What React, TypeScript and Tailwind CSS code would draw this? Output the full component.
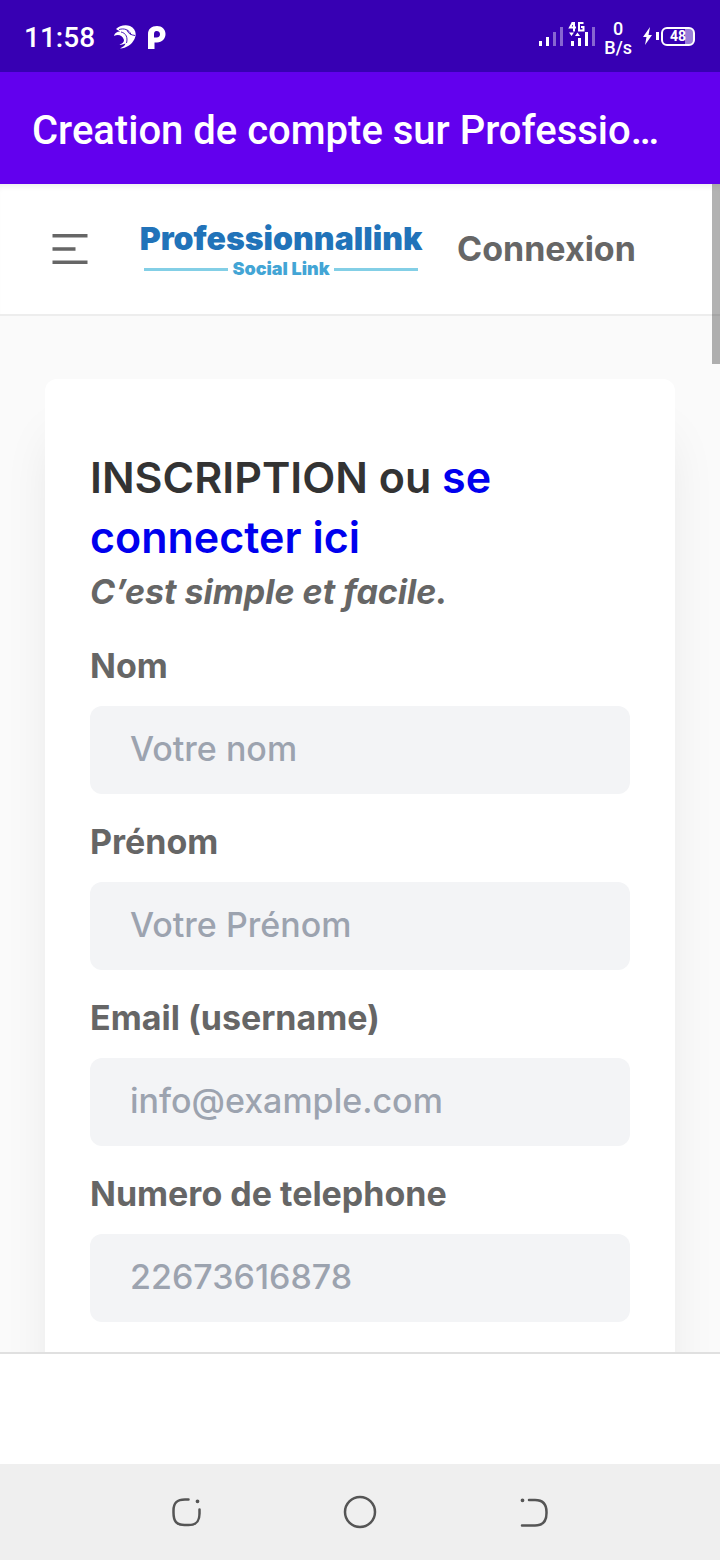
interface Field {
  id: string;
  label: string;
  type: string;
  placeholder: string;
}

const FIELDS: Field[] = [
  { id: "nom", label: "Nom", type: "text", placeholder: "Votre nom" },
  { id: "prenom", label: "Prénom", type: "text", placeholder: "Votre Prénom" },
  { id: "email", label: "Email (username)", type: "email", placeholder: "info@example.com" },
  { id: "telephone", label: "Numero de telephone", type: "tel", placeholder: "22673616878" },
];

function BirdIcon() {
  return (
    <svg width="24" height="24" viewBox="0 0 24 24" fill="none" aria-hidden="true">
      <path
        d="M3 4C6 1 12-1 17 1c5.500 2.500 7 8 4.500 13-3 6-8 9-14.500 9.500 3-1.500 5-3 5.500-5-2 1-4 1.500-6 1 3-1 4.500-2.500 4.500-4.500C9.500 10 5 9 1 11c.5-3 3-4.500 6-4.500C5.500 5.500 4.500 5 3 4z"
        fill="#fff"
      />
      <path
        d="M6 4.500c5-1.500 10 0 12 5M8 7c5 1 7 5.500 5.500 11M14 5c1 3.500 4 5 8 5.500"
        stroke="#3700b3"
        strokeWidth="0.9"
      />
    </svg>
  );
}

function ParkingIcon() {
  return (
    <svg width="19" height="24" viewBox="0 0 19 24" aria-hidden="true">
      <path
        d="M1 24V9C1 4 4.500 1 10 1c5 0 8.500 3.500 8.500 8S15 17.500 10 17.500H7.500V24zM9.500 6C7.500 6 7 7.500 7 9.500V12.500h2.500c2.500 0 3.500-1.500 3.500-3.300S12 6 9.500 6z"
        fill="#fff"
        fillRule="evenodd"
      />
    </svg>
  );
}

function SignalIcons() {
  return (
    <svg width="58" height="28" viewBox="0 0 58 28" aria-hidden="true">
      <g fill="#fff">
        <path d="M1 19h3v5H1zM8 15h3v9H8zM33 19h3v5h-3zM40 16h3v8h-3zM47 10h3v14h-3z" />
        <path d="M31 10.500h5l-2.500 3.500zM37 14h5l-2.500-3.500z" />
        <path d="M15 10h3v14h-3zM22 5h3v19h-3zM54 5h3v19h-3z" opacity="0.4" />
      </g>
      <path d="M34.500 0v1L32 5.500h6M36 0v9.500M45.500 1H41v7.500h4.500v-3.500h-2.500" fill="none" stroke="#fff" strokeWidth="2" />
    </svg>
  );
}

function StatusBar() {
  return (
    <div className="flex h-[72px] shrink-0 items-center justify-between bg-[#3700b3] pl-6 pr-[25px] font-['Roboto',sans-serif] text-white">
      <div className="flex items-center pt-0.5">
        <span className="pt-0.5 text-[28px] font-medium leading-8">11:58</span>
        <span className="ml-[18px]"><BirdIcon /></span>
        <span className="ml-2.5"><ParkingIcon /></span>
      </div>
      <div className="flex items-center">
        <SignalIcons />
        <div className="ml-2 flex flex-col items-center pt-1 text-[18px] font-medium leading-[19px]">
          <span>0</span>
          <span>B/s</span>
        </div>
        <svg className="ml-2.5" width="18" height="18" viewBox="0 0 18 18" fill="#fff" aria-hidden="true">
          <path d="M8 0L1 10h3.500L3 18l7-10H6.500zM14 5h3v8h-3z" />
        </svg>
        <div className="ml-px flex h-[19px] w-[34px] items-center justify-center rounded-md border-2 border-white bg-linear-to-r from-transparent from-75% to-white/50 to-75% text-[14px] font-bold leading-4">
          48
        </div>
      </div>
    </div>
  );
}

function Logo() {
  return (
    <a href="#" className="flex w-[282px] flex-col items-center pt-2">
      <span className="text-[32px] font-black leading-8 text-[#2173b9]">
        Professionnallink
      </span>
      <span className="flex w-full items-center gap-1 px-1">
        <span className="h-[3px] flex-1 bg-[#83cfe6]" />
        <span className="text-[18px] font-black leading-7 text-[#43a5d5]">Social Link</span>
        <span className="h-[3px] flex-1 bg-[#83cfe6]" />
      </span>
    </a>
  );
}

function SiteHeader() {
  return (
    <header className="flex h-[132px] shrink-0 items-center border-b-2 border-[#ededed] bg-white pl-[52px] shadow-[inset_0_6px_6px_-4px_rgba(0,0,0,0.08)]">
      <button type="button" aria-label="Menu">
        <svg width="36" height="32" viewBox="0 0 36 32" fill="#666" aria-hidden="true">
          <path d="M0.500 1h35v3.500h-35zM0.500 14.300h23v3.500h-23zM0.500 27.600h35v3.500h-35z" />
        </svg>
      </button>
      <div className="ml-[52px]"><Logo /></div>
      <a href="#" className="ml-[35px] text-[34px] font-bold leading-[50px] text-[#666]">Connexion</a>
    </header>
  );
}

function SignupForm() {
  return (
    <form className="mx-[45px] mt-[63px] rounded-xl bg-white px-[45px] pb-16 pt-[68px] shadow-[0_50px_50px_-12px_rgba(0,0,0,0.1)]">
      <h1 className="text-[43px] font-semibold leading-[60px] text-[#333]">
        INSCRIPTION ou <a href="#" className="text-[#0000ee]">se connecter ici</a>
      </h1>
      <p className="mb-6 text-[34px] font-bold italic leading-[50px] text-[#666]">C’est simple et facile.</p>
      {FIELDS.map((field) => (
        <div key={field.id} className="mb-[23px]">
          <label htmlFor={field.id} className="block text-[34px] font-bold leading-[50px] text-[#666]">
            {field.label}
          </label>
          <input
            id={field.id}
            type={field.type}
            placeholder={field.placeholder}
            className="mt-[15px] block h-[88px] w-full rounded-xl bg-[#f3f4f6] px-10 pb-1 text-[34px] font-medium text-[#666] placeholder:text-[#9ca3af]"
          />
        </div>
      ))}
    </form>
  );
}

function NavigationBar() {
  return (
    <nav className="flex h-24 shrink-0 items-center justify-center gap-[138px] bg-[#efefef]">
      <button type="button" aria-label="Applications récentes">
        <svg width="36" height="36" viewBox="0 0 36 36" fill="none" stroke="#555" strokeWidth="2.500" strokeLinecap="round" aria-hidden="true">
          <path d="M20.500 5.500H17C9 5.500 5.500 8.500 5.500 16.500v2c0 9 3 12.500 11 12.500h4c8 0 11-3.500 11-11.500v-4" />
          <circle cx="29.500" cy="7.300" r="1" fill="#555" strokeWidth="1.800" />
        </svg>
      </button>
      <button type="button" aria-label="Accueil">
        <svg width="36" height="36" viewBox="0 0 36 36" fill="none" stroke="#555" strokeWidth="2.500" aria-hidden="true">
          <circle cx="18" cy="18" r="15" />
        </svg>
      </button>
      <button type="button" aria-label="Retour">
        <svg width="36" height="36" viewBox="0 0 36 36" fill="none" stroke="#555" strokeWidth="2.500" strokeLinecap="round" aria-hidden="true">
          <path d="M13 6h6c8 0 11.500 4 11.500 12v1c0 8-3.500 12.500-11.500 12.500H6" />
          <circle cx="6.500" cy="6.300" r="1" fill="#555" strokeWidth="1.800" />
        </svg>
      </button>
    </nav>
  );
}

export default function App() {
  return (
    <div className="flex h-screen flex-col overflow-hidden bg-white font-['Inter',sans-serif]">
      <StatusBar />
      <div className="flex h-28 shrink-0 items-center bg-[#6200ee] px-8 pt-1.5">
        <div className="truncate font-['Roboto',sans-serif] text-[40px] font-medium leading-[56px] text-white">
          Creation de compte sur Professio…
        </div>
      </div>

      <div className="relative flex min-h-0 flex-1 flex-col">
        <SiteHeader />
        <main className="flow-root min-h-0 flex-1 overflow-hidden bg-[#fafafa]">
          <SignupForm />
        </main>
        {/* Scroll indicator */}
        <div className="absolute right-0 top-0 h-[180px] w-2 bg-black/30" />
      </div>

      <div className="h-28 shrink-0 border-t-2 border-[#e0e0e0] bg-white" />
      <NavigationBar />
    </div>
  );
}
